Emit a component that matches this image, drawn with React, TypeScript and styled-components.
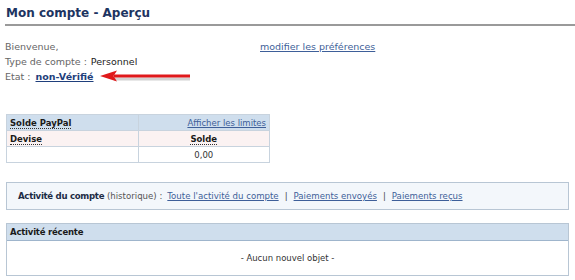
import styled, { createGlobalStyle } from 'styled-components';

const GlobalStyle = createGlobalStyle`
  html, body {
    margin: 0;
    padding: 0;
    background: #ffffff;
  }
  body {
    font-family: 'DejaVu Sans', Verdana, sans-serif;
    font-size: 9.5px;
    color: #666666;
  }
`;

const Page = styled.div`
  width: 575px;
  height: 280px;
  padding: 0 6px 0 5px;
  box-sizing: border-box;
  overflow: hidden;
`;

const Title = styled.h1`
  margin: 0 -6px 0 0;
  padding: 6px 0 4px 1px;
  font-size: 12px;
  line-height: 14px;
  font-weight: bold;
  color: #1d3461;
  border-bottom: 2px solid #9a9a9a;
`;

const Intro = styled.div`
  display: grid;
  grid-template-columns: 255px 1fr;
  padding-top: 13px;
`;

const InfoList = styled.div`
  display: flex;
  flex-direction: column;
`;

const InfoLine = styled.div`
  height: 15px;
  line-height: 15px;
  display: flex;
  align-items: center;
  white-space: nowrap;
`;

const Value = styled.span`
  color: #222222;
  margin-left: 4px;
`;

const Link = styled.a<{ $strong?: boolean }>`
  color: ${(p) => (p.$strong ? '#1f3f7c' : '#3e5f99')};
  font-weight: ${(p) => (p.$strong ? 'bold' : 'normal')};
  text-decoration: underline;
  cursor: pointer;
`;

const StatusLink = styled(Link)`
  margin-left: 5px;
`;

const PrefLink = styled(Link)`
  display: block;
  line-height: 15px;
  height: 15px;
`;

const Arrow = styled.svg`
  margin-left: 6px;
  flex: none;
`;

const BalanceTable = styled.table`
  margin: 30px 0 0 1px;
  width: 264px;
  border-collapse: collapse;
  table-layout: fixed;
  border: 1px solid #b8c7d6;
  font-size: 8.5px;
  color: #333333;
`;

const HeadRow = styled.tr`
  background: #cfdeed;
  height: 16px;
`;

const LabelRow = styled.tr`
  background: #fbf2f2;
  height: 16px;
`;

const DataRow = styled.tr`
  background: #ffffff;
  height: 16px;
`;

const Cell = styled.td<{ $align?: 'left' | 'center' | 'right' }>`
  width: 50%;
  padding: 0 3px;
  text-align: ${(p) => p.$align || 'left'};
  border: 1px solid #c8d3de;
  white-space: nowrap;
  overflow: hidden;
`;

const Dotted = styled.span`
  font-weight: bold;
  color: #1a1a1a;
  border-bottom: 1px dotted #333333;
`;

const ActivityBar = styled.div`
  margin: 19px 0 0 1px;
  height: 26px;
  display: flex;
  align-items: center;
  gap: 5px;
  padding: 0 11px;
  background: #f3f7fb;
  border: 1px solid #b8c6d4;
  color: #555555;
  font-size: 8.6px;
  white-space: nowrap;
`;

const BarLabel = styled.span`
  font-weight: bold;
  color: #1d2c45;
  letter-spacing: -0.3px;
`;

const Sep = styled.span`
  color: #444444;
  margin: 0 1px;
`;

const RecentBox = styled.div`
  margin: 13px 0 0 1px;
  border: 1px solid #b8c6d4;
`;

const RecentHead = styled.div`
  background: #cfdeed;
  border-bottom: 1px solid #9fb5cc;
  height: 16px;
  line-height: 16px;
  padding: 0 3px;
  font-size: 8.5px;
  font-weight: bold;
  color: #1a1a1a;
  letter-spacing: -0.2px;
`;

const RecentBody = styled.div`
  height: 34px;
  display: flex;
  align-items: center;
  justify-content: center;
  font-size: 8.5px;
  color: #333333;
`;

export default function App() {
  return (
    <>
      <GlobalStyle />
      <Page>
        <Title>Mon compte - Aperçu</Title>

        <Intro>
          <InfoList>
            <InfoLine>Bienvenue,</InfoLine>
            <InfoLine>
              Type de compte :<Value>Personnel</Value>
            </InfoLine>
            <InfoLine>
              Etat :<StatusLink $strong>non-Vérifié</StatusLink>
              <Arrow width="92" height="15" viewBox="0 0 92 15">
                <path d="M14 10 L90 10" stroke="#d2d2d2" strokeWidth="3" />
                <path d="M14 7 L90 7" stroke="#e0191b" strokeWidth="3" />
                <path d="M0 7 L17 1.5 L13.5 7 L17 12.5 Z" fill="#e0191b" />
              </Arrow>
            </InfoLine>
          </InfoList>
          <div>
            <PrefLink>modifier les préférences</PrefLink>
          </div>
        </Intro>

        <BalanceTable>
          <tbody>
            <HeadRow>
              <Cell><Dotted>Solde PayPal</Dotted></Cell>
              <Cell $align="right"><Link>Afficher les limites</Link></Cell>
            </HeadRow>
            <LabelRow>
              <Cell><Dotted>Devise</Dotted></Cell>
              <Cell $align="center"><Dotted>Solde</Dotted></Cell>
            </LabelRow>
            <DataRow>
              <Cell />
              <Cell $align="center">0,00</Cell>
            </DataRow>
          </tbody>
        </BalanceTable>

        <ActivityBar>
          <span><BarLabel>Activité du compte</BarLabel> (historique) :</span>
          <Link>Toute l'activité du compte</Link>
          <Sep>|</Sep>
          <Link>Paiements envoyés</Link>
          <Sep>|</Sep>
          <Link>Paiements reçus</Link>
        </ActivityBar>

        <RecentBox>
          <RecentHead>Activité récente</RecentHead>
          <RecentBody>- Aucun nouvel objet -</RecentBody>
        </RecentBox>
      </Page>
    </>
  );
}
